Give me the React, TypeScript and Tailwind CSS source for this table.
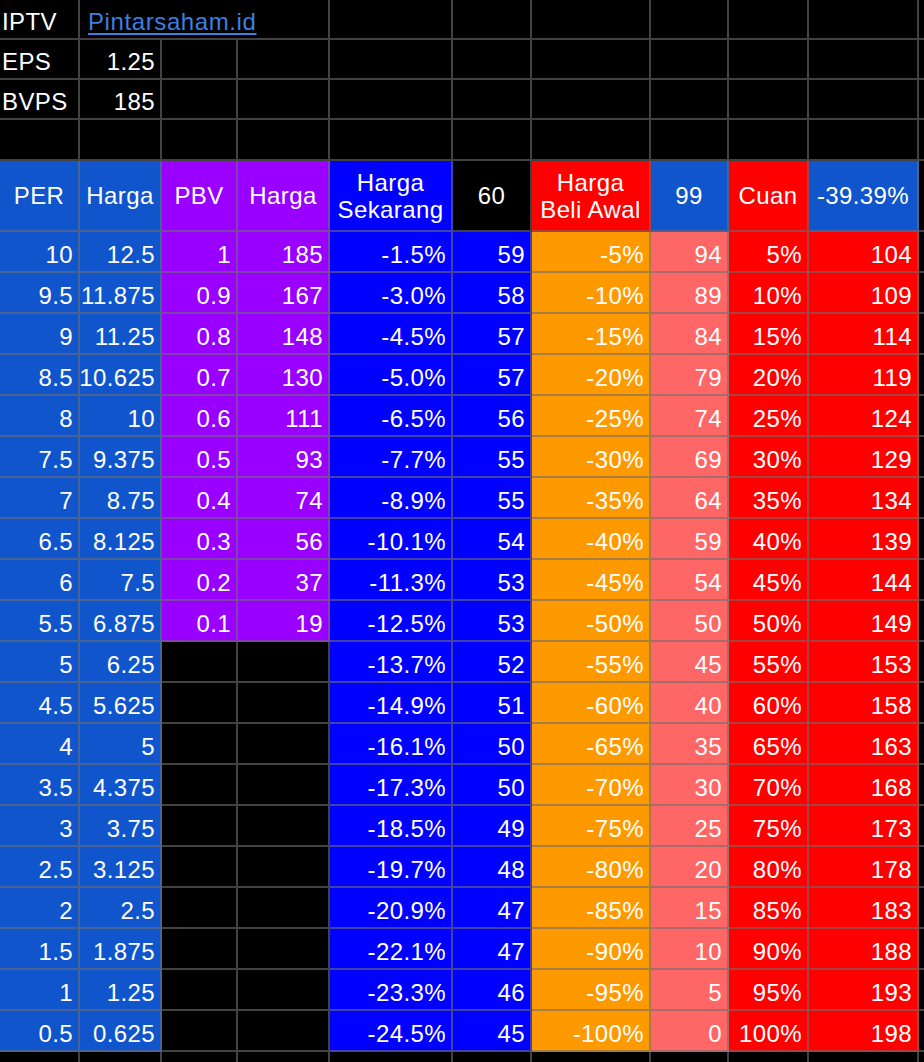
import React from 'react';

// warna-warna sel, mengikuti palet Google Sheets
const BLUE_DARK = 'bg-[#1155cc]';
const PURPLE = 'bg-[#9900ff]';
const BLUE = 'bg-[#0000ff]';
const ORANGE = 'bg-[#ff9900]';
const PINK = 'bg-[#ff6666]';
const RED = 'bg-[#ff0000]';
const BLACK = 'bg-black';

const per = [10, 9.5, 9, 8.5, 8, 7.5, 7, 6.5, 6, 5.5, 5, 4.5, 4, 3.5, 3, 2.5, 2, 1.5, 1, 0.5];
const pbv = ['1', '0.9', '0.8', '0.7', '0.6', '0.5', '0.4', '0.3', '0.2', '0.1'];
const pbvHarga = [185, 167, 148, 130, 111, 93, 74, 56, 37, 19];
const sekarang = ['-1.5%', '-3.0%', '-4.5%', '-5.0%', '-6.5%', '-7.7%', '-8.9%', '-10.1%', '-11.3%', '-12.5%', '-13.7%', '-14.9%', '-16.1%', '-17.3%', '-18.5%', '-19.7%', '-20.9%', '-22.1%', '-23.3%', '-24.5%'];
const harga60 = [59, 58, 57, 57, 56, 55, 55, 54, 53, 53, 52, 51, 50, 50, 49, 48, 47, 47, 46, 45];
const harga99 = [94, 89, 84, 79, 74, 69, 64, 59, 54, 50, 45, 40, 35, 30, 25, 20, 15, 10, 5, 0];
const target = [104, 109, 114, 119, 124, 129, 134, 139, 144, 149, 153, 158, 163, 168, 173, 178, 183, 188, 193, 198];

type CellProps = {
    bg?: string;
    align?: 'left' | 'right' | 'center';
    className?: string;
    children?: React.ReactNode;
};

function Cell({ bg = BLACK, align = 'right', className = '', children }: CellProps) {
    const alignCls =
        align === 'left' ? 'justify-start pl-[2px]' :
        align === 'center' ? 'justify-center text-center' :
        'justify-end pr-[5px]';
    return (
        <div className={`flex items-end pb-[3px] overflow-hidden whitespace-nowrap border-r-2 border-b-2 border-[rgba(110,110,110,0.6)] leading-[27px] ${alignCls} ${bg} ${className}`}>
            {children}
        </div>
    );
}

function HeadCell({ bg, children }: { bg: string; children: React.ReactNode }) {
    return (
        <div className={`flex items-center justify-center text-center leading-[27px] border-r-2 border-b-2 border-[rgba(110,110,110,0.6)] ${bg}`}>
            <div>{children}</div>
        </div>
    );
}

export default function App() {
    return (
        <div className="w-[924px] h-[1062px] overflow-hidden bg-black text-white text-[24px] tracking-[0.4px] font-['Liberation_Sans',Arial,sans-serif]">
            <div className="grid w-[979px] grid-cols-[80px_82px_76px_92px_123px_79px_119px_78px_80px_110px_60px] grid-rows-[40px_40px_40px_41px_71px_repeat(20,41px)_20px]">
                {/* baris info saham */}
                <Cell align="left">IPTV</Cell>
                <Cell align="left" className="col-span-3 pl-[8px]">
                    <span className="text-[#3d7fe2] tracking-[0.6px] underline decoration-2 underline-offset-[3px]">Pintarsaham.id</span>
                </Cell>
                {Array.from({ length: 7 }).map((_, i) => <Cell key={`r1-${i}`} />)}

                <Cell align="left">EPS</Cell>
                <Cell>1.25</Cell>
                {Array.from({ length: 9 }).map((_, i) => <Cell key={`r2-${i}`} />)}

                <Cell align="left">BVPS</Cell>
                <Cell>185</Cell>
                {Array.from({ length: 9 }).map((_, i) => <Cell key={`r3-${i}`} />)}

                {Array.from({ length: 11 }).map((_, i) => <Cell key={`r4-${i}`} />)}

                {/* header tabel */}
                <HeadCell bg={BLUE_DARK}>PER</HeadCell>
                <HeadCell bg={BLUE_DARK}>Harga</HeadCell>
                <HeadCell bg={PURPLE}>PBV</HeadCell>
                <HeadCell bg={PURPLE}>Harga</HeadCell>
                <HeadCell bg={BLUE}>Harga<br />Sekarang</HeadCell>
                <HeadCell bg={BLACK}>60</HeadCell>
                <HeadCell bg={RED}>Harga<br />Beli Awal</HeadCell>
                <HeadCell bg={BLUE_DARK}>99</HeadCell>
                <HeadCell bg={RED}>Cuan</HeadCell>
                <HeadCell bg={BLUE_DARK}>-39.39%</HeadCell>
                <HeadCell bg={BLACK}>{''}</HeadCell>

                {/* isi tabel */}
                {per.map((p, i) => {
                    const harga = String(p * 1.25);
                    const tight = harga.length > 5;
                    return (
                        <React.Fragment key={p}>
                            <Cell bg={BLUE_DARK}>{p}</Cell>
                            <Cell bg={BLUE_DARK} className={tight ? 'pr-0' : ''}>{harga}</Cell>
                            <Cell bg={i < 10 ? PURPLE : BLACK}>{pbv[i] ?? ''}</Cell>
                            <Cell bg={i < 10 ? PURPLE : BLACK}>{pbvHarga[i] ?? ''}</Cell>
                            <Cell bg={BLUE}>{sekarang[i]}</Cell>
                            <Cell bg={BLUE}>{harga60[i]}</Cell>
                            <Cell bg={ORANGE}>{`-${(i + 1) * 5}%`}</Cell>
                            <Cell bg={PINK}>{harga99[i]}</Cell>
                            <Cell bg={RED}>{`${(i + 1) * 5}%`}</Cell>
                            <Cell bg={RED}>{target[i]}</Cell>
                            <Cell />
                        </React.Fragment>
                    );
                })}

                {Array.from({ length: 11 }).map((_, i) => <Cell key={`end-${i}`} />)}
            </div>
        </div>
    );
}
